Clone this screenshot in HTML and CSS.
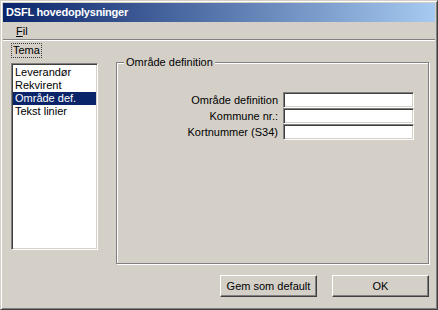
FILE: index.html
```html
<!DOCTYPE html>
<html lang="da">
<head>
  <meta charset="UTF-8" />
  <title>DSFL hovedoplysninger</title>
  <link rel="stylesheet" href="styles.css">
</head>
<body>
  <div class="window">
    <div class="titlebar">DSFL hovedoplysninger</div>
    <div class="menubar">
      <span class="menu-item"><u>F</u>il</span>
    </div>
    <div class="menu-sep"></div>

    <div class="main">
      <div class="tema-col">
        <div class="tema-label">Tema</div>
        <ul class="listbox">
          <li>Leverandør</li>
          <li>Rekvirent</li>
          <li class="selected">Område def.</li>
          <li>Tekst linier</li>
        </ul>
      </div>

      <div class="right-col">
        <div class="groupbox">
          <span class="group-title">Område definition</span>
          <div class="form">
            <label>Område definition</label>
            <input type="text" class="field" />
            <label>Kommune nr.:</label>
            <input type="text" class="field" />
            <label>Kortnummer (S34)</label>
            <input type="text" class="field" />
          </div>
        </div>
        <div class="buttons">
          <button class="btn">Gem som default</button>
          <button class="btn">OK</button>
        </div>
      </div>
    </div>
  </div>
</body>
</html>
```

FILE: styles.css
```css
body {
  margin: 0;
  font-family: 'Liberation Sans', Arial, sans-serif;
  font-size: 11px;
  color: #000;
  background: #d4d0c8;
}

.window {
  width: 438px;
  height: 310px;
  box-sizing: border-box;
  background: #d4d0c8;
  border: 1px solid;
  border-color: #d4d0c8 #404040 #404040 #d4d0c8;
  box-shadow: inset 1px 1px 0 #fff, inset -1px -1px 0 #808080;
  padding: 2px;
  display: flex;
  flex-direction: column;
}

.titlebar {
  height: 19px;
  line-height: 19px;
  padding-left: 3px;
  color: #fff;
  font-weight: 700;
  font-size: 11px;
  letter-spacing: -0.2px;
  background: linear-gradient(to right, #0a246a, #a6caf0);
}

.menubar {
  height: 17px;
  line-height: 18px;
  padding-left: 13px;
}

.menu-item u {
  text-decoration: underline;
}

.menu-sep {
  border-top: 1px solid #808080;
  border-bottom: 1px solid #fff;
}

.main {
  display: flex;
  gap: 18px;
  padding: 2px 0 0 8px;
}

/* left column: tema + list */
.tema-col {
  width: 87px;
}

.tema-label {
  display: inline-block;
  height: 13px;
  line-height: 13px;
  padding: 0 1px;
  border: 1px dotted #404040;
}

.listbox {
  list-style: none;
  margin: 5px 0 0 0;
  padding: 2px 1px 0 1px;
  height: 183px;
  background: #fff;
  border: 1px solid;
  border-color: #808080 #fff #fff #808080;
  box-shadow: inset 1px 1px 0 #404040, inset -1px -1px 0 #d4d0c8;
}

.listbox li {
  height: 13px;
  line-height: 13px;
  padding-left: 2px;
  white-space: nowrap;
}

.listbox li.selected {
  background: #0a246a;
  color: #fff;
}

/* right column: group + buttons */
.right-col {
  width: 313px;
  display: flex;
  flex-direction: column;
}

.groupbox {
  position: relative;
  margin-top: 19px;
  height: 200px;
  border: 1px solid #808080;
  box-shadow: 1px 1px 0 #fff, inset 1px 1px 0 #fff;
}

.group-title {
  position: absolute;
  top: -8px;
  left: 7px;
  padding: 0 2px;
  line-height: 14px;
  background: #d4d0c8;
}

.form {
  display: grid;
  grid-template-columns: auto 131px;
  grid-auto-rows: 16px;
  column-gap: 5px;
  justify-content: end;
  align-items: center;
  margin: 29px 14px 0 0;
}

.form label {
  text-align: right;
  white-space: nowrap;
}

.field {
  box-sizing: border-box;
  width: 131px;
  height: 16px;
  margin: 0;
  padding: 0;
  background: #fff;
  border: 1px solid;
  border-color: #808080 #fff #fff #808080;
  box-shadow: inset 1px 1px 0 #404040, inset -1px -1px 0 #d4d0c8;
  outline: none;
}

.buttons {
  display: flex;
  justify-content: flex-end;
  gap: 15px;
  margin-top: 11px;
}

.btn {
  box-sizing: border-box;
  width: 97px;
  height: 22px;
  margin: 0;
  padding: 0;
  font-family: 'Liberation Sans', Arial, sans-serif;
  font-size: 11px;
  color: #000;
  background: #d4d0c8;
  border: 1px solid;
  border-color: #fff #404040 #404040 #fff;
  box-shadow: inset -1px -1px 0 #808080;
}
```
